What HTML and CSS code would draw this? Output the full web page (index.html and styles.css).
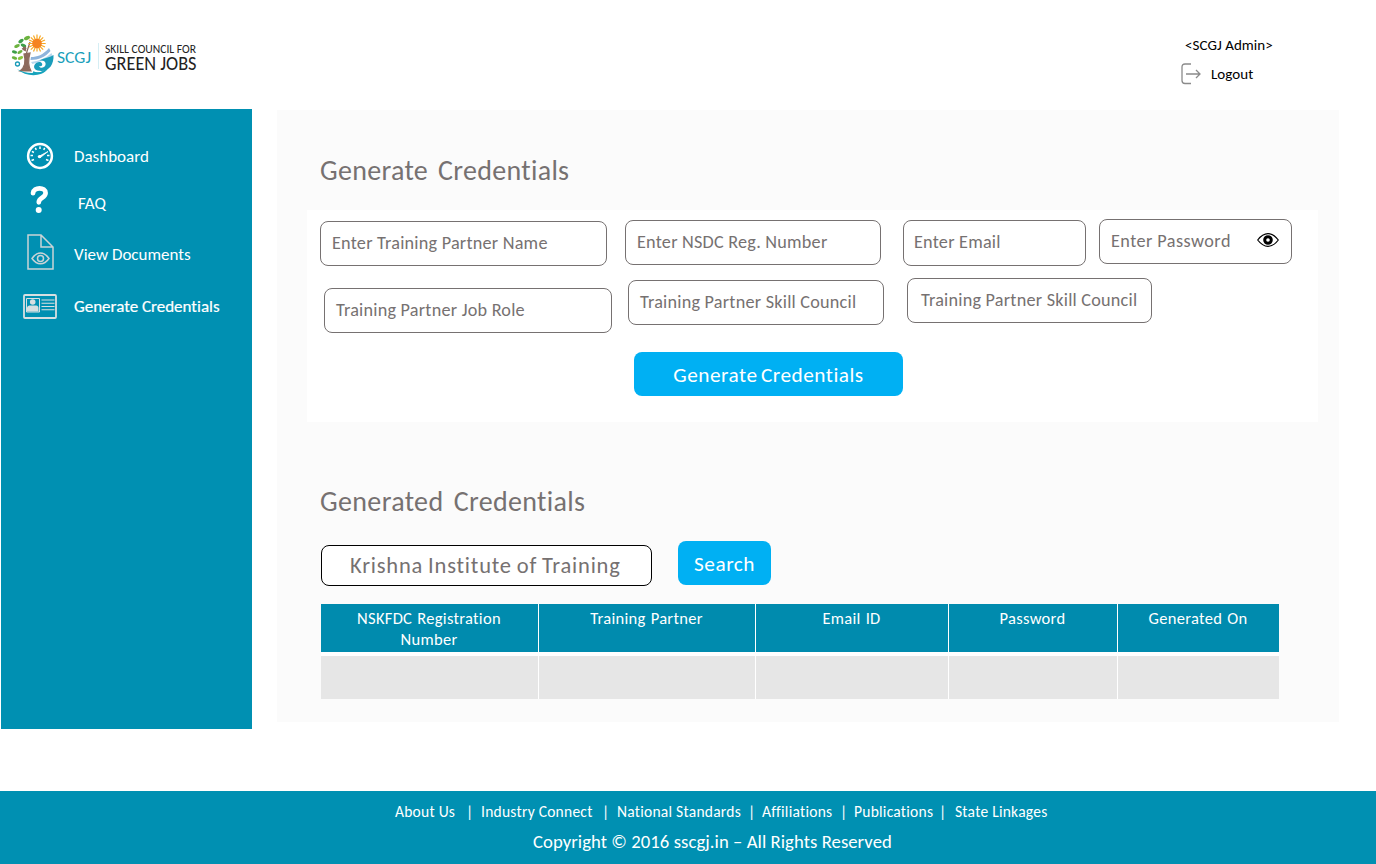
FILE: index.html
```html
<!DOCTYPE html>
<html lang="en">
<head>
<meta charset="utf-8">
<title>SCGJ – Generate Credentials</title>
<link rel="stylesheet" href="styles.css">
</head>
<body>
<header class="header">
  <svg class="logo" width="190" height="46" viewBox="10 33 190 46">
    <g fill="#6cb33f">
      <ellipse cx="27" cy="38" rx="3.2" ry="1.8" transform="rotate(-25 27 38)"/>
      <ellipse cx="21" cy="41" rx="3" ry="1.7" transform="rotate(-35 21 41)" fill="#3f9f49"/>
      <ellipse cx="17" cy="46" rx="3" ry="1.6" transform="rotate(-25 17 46)"/>
      <ellipse cx="23.500" cy="45.500" rx="3" ry="1.6" transform="rotate(25 23.500 45.500)" fill="#3f9f49"/>
      <ellipse cx="14.500" cy="52" rx="2.600" ry="1.600" transform="rotate(10 14.500 52)" fill="#3f9f49"/>
      <ellipse cx="20" cy="52" rx="2.800" ry="1.500" transform="rotate(-30 20 52)"/>
      <ellipse cx="14.500" cy="58" rx="2.800" ry="1.500" transform="rotate(15 14.500 58)"/>
      <ellipse cx="20.500" cy="58" rx="2.800" ry="1.600" transform="rotate(-20 20.500 58)" fill="#8cc63f"/>
    </g>
    <circle cx="17.500" cy="64" r="2" fill="none" stroke="#1a9bb8" stroke-width="1.300"/>
    <path d="M26 51l-4-2.500M26.500 53l3.500-11M24 54c2 7 1 13-4 17h11c-3-5-3-11-1-18z" fill="#8c6a5d" stroke="#8c6a5d" stroke-width="1.200"/>
    <circle cx="24.500" cy="48.500" r="1.900" fill="#8c6a5d"/>
    <path d="M37 34.500v17M28.300 43.500h17.400M30.800 37.300l12.400 12.400M43.200 37.300l-12.400 12.400M33.500 35.500l7 16M40.500 35.500l-7 16M29 40l16 7M29 47l16-7" stroke="#f7a823" stroke-width="1.200"/>
    <circle cx="37" cy="43.500" r="4.800" fill="#f58220"/>
    <path d="M31 57c6 0 12-2 18-9l1.500 3c-5 6-12 9-20 9z" fill="#8fb4dc"/>
    <path d="M31 62c8-1 15-4 20.500-9l1 3c-5 3-11 5-20 8z" fill="#b9d8ee"/>
    <path d="M53.500 55c.5 9-4 16-12 16-6 0-8.500-3-7-6 1.500-3 6-4 7.500-1.500 1 2-1 3.500-3 2.500 1 3 5.500 2 6.500-1 1-4-3-5-6-4.500 6-3 9-2.500 14-5.500z" fill="#1b9dbb"/>
    <path d="M17 69c8 5 20 5 30 1-5 6-20 8-30-1z" fill="#16a3bc"/>
    <path d="M33 72c4 2 9 1 14-3" fill="none" stroke="#16a3bc" stroke-width="1.500"/>
    <text class="logo-cyan" x="57" y="62.500" font-size="17" textLength="34" lengthAdjust="spacingAndGlyphs">SCGJ</text>
    <path d="M98.500 43v26" stroke="#d5eef4"/>
    <text class="logo-dark" x="105" y="53" font-size="12.500" textLength="91" lengthAdjust="spacingAndGlyphs">SKILL COUNCIL FOR</text>
    <text class="logo-dark" x="105" y="70" font-size="19.500" textLength="91.500" lengthAdjust="spacingAndGlyphs">GREEN JOBS</text>
  </svg>
  <div class="account">
    <div class="account-name">&lt;SCGJ Admin&gt;</div>
    <a class="logout">
      <svg width="20" height="22" viewBox="0 0 20 22" fill="none" stroke="#8b8b8b" stroke-width="1.300"><path d="M10 1H4C2 1 1 2 1 4v13.500c0 2 1 3 3 3h6M5 11h14M15 7l4 4-4 4"/></svg>
      <span>Logout</span>
    </a>
  </div>
</header>

<main class="main">
  <nav class="sidebar">
    <a class="nav nav-dashboard">
      <svg width="28" height="28" viewBox="0 0 28 28" fill="none" stroke="#fff">
        <circle cx="14" cy="14" r="11.900" stroke-width="2.500"/>
        <path d="M14 4.500v2.500M9.300 5.800l1 2M18.700 5.800l-1 2M5.900 9.300l2 1.200M4.500 13.600h2.500M5.500 18.500l2.500-1M22.500 18.500l-2.500-1M21 13.600h2.500" stroke-width="1.500"/>
        <path d="M13 14.300l9-4.800-8 6.300z" fill="#fff" stroke-width=".8"/>
        <circle cx="13.500" cy="14.600" r="1.700" fill="#fff" stroke="none"/>
      </svg>
      <span>Dashboard</span>
    </a>
    <a class="nav nav-faq">
      <svg width="20" height="28" viewBox="0 0 20 28"><path d="M4 8.200C4.600 1.600 16.600 1.800 16.600 8c0 5-6.800 4.600-6.800 9.300" fill="none" stroke="#fff" stroke-width="4.700" stroke-linecap="round"/><circle cx="9.700" cy="25" r="3" fill="#fff"/></svg>
      <span>FAQ</span>
    </a>
    <a class="nav nav-documents">
      <svg width="28" height="36" viewBox="0 0 28 36" fill="none" stroke="#c9d3d6" stroke-width="1.500"><path d="M1 1h13l12 12v22H1zM14 1v12h12"/><path d="M5 24.500c5-7.500 12-7.500 17 0-5 7-12 7-17 0z"/><circle cx="13.500" cy="24.500" r="3"/></svg>
      <span>View Documents</span>
    </a>
    <a class="nav nav-credentials">
      <svg width="34" height="25" viewBox="0 0 34 25" fill="none" stroke="#d7dfe1"><rect x="1" y="1" width="32" height="23" rx="1" stroke-width="1.800"/><path d="M3.500 4.500h13v13.500h-13z"/><path d="M18.500 6h13M18.500 9.300h13M18.500 12.500h13M18.500 15.800h13" stroke-width="1.100"/><circle cx="9.700" cy="8" r="2.800" fill="#d7dfe1" stroke="none"/><path d="M4 17.500v-3.500c0-2 2-2.500 3.500-2.500h4.500c2 0 3.500.5 3.500 2.500v3.500z" fill="#d7dfe1" stroke="none"/></svg>
      <span>Generate Credentials</span>
    </a>
  </nav>

  <section class="content">
    <h1 class="title">Generate Credentials</h1>
    <form class="panel">
      <div class="row row-first">
        <div class="field field-name"><span>Enter Training Partner Name</span></div>
        <div class="field field-reg"><span>Enter NSDC Reg. Number</span></div>
        <div class="field field-email"><span>Enter Email</span></div>
        <div class="field field-password"><span>Enter Password</span>
          <svg width="22" height="14" viewBox="0 0 22 14"><path d="M.7 7Q5.500.7 11 .7T21.300 7Q16.500 13.300 11 13.300T.7 7z" fill="#fff" stroke="#000" stroke-width="1.200"/><circle cx="11" cy="7" r="3.300" fill="none" stroke="#000" stroke-width="3"/></svg>
        </div>
      </div>
      <div class="row row-second">
        <div class="field field-role"><span>Training Partner Job Role</span></div>
        <div class="field field-council"><span>Training Partner Skill Council</span></div>
        <div class="field field-council-alt"><span>Training Partner Skill Council</span></div>
      </div>
      <button class="button button-generate" type="button">Generate Credentials</button>
    </form>

    <h2 class="title title-generated">Generated Credentials</h2>
    <div class="search">
      <div class="search-input">Krishna Institute of Training</div>
      <button class="button button-search" type="button">Search</button>
    </div>
    <div class="table">
      <div class="th">NSKFDC Registration<br>Number</div>
      <div class="th">Training Partner</div>
      <div class="th">Email ID</div>
      <div class="th">Password</div>
      <div class="th">Generated On</div>
      <div class="td"></div><div class="td"></div><div class="td"></div><div class="td"></div><div class="td"></div>
    </div>
  </section>
</main>

<footer class="footer">
  <div class="links">
    <a>About Us</a><i>|</i><a>Industry Connect</a><i>|</i><a>National Standards</a><i>|</i><a>Affiliations</a><i>|</i><a>Publications</a><i>|</i><a>State Linkages</a>
  </div>
  <div class="copyright">Copyright © 2016 sscgj.in – All Rights Reserved</div>
</footer>
</body>
</html>
```
FILE: styles.css
```css
* { box-sizing: border-box; }
body {
  margin: 0;
  width: 1376px;
  height: 864px;
  overflow: hidden;
  background: #fff;
  font-family: Carlito, Lato, sans-serif;
  font-variant-ligatures: none;
  white-space: nowrap;
  display: flex;
  flex-direction: column;
}

.header {
  height: 109px;
  padding: 33px 0 0 10px;
  display: flex;
  justify-content: space-between;
}
.logo { flex: none; overflow: visible; }
.logo-cyan { fill: #1a9fbb; }
.logo-dark { fill: #222; }
.account {
  width: 195px;
  padding-top: 2px;
  font-size: 15px;
  line-height: 20px;
  letter-spacing: .05px;
  color: #000;
}
.account-name { padding-left: 4px; }
.logout {
  margin-top: 8px;
  display: flex;
  align-items: center;
  gap: 10px;
}

.main { height: 682px; display: flex; align-items: flex-start; }
.sidebar {
  width: 251px;
  height: 620px;
  margin-left: 1px;
  background: #0090b2;
  padding-top: 33px;
}
.nav {
  display: flex;
  color: #fff;
  font-size: 17px;
  line-height: 20px;
}
.nav svg { flex: none; }
.nav-dashboard { height: 43px; padding-left: 25px; }
.nav-dashboard span { margin: 5px 0 0 20px; }
.nav-faq { height: 49px; padding-left: 28px; }
.nav-faq span { margin: 9px 0 0 29px; }
.nav-documents { height: 60px; padding-left: 26px; }
.nav-documents span { margin: 11px 0 0 19px; }
.nav-credentials { padding-left: 22px; }
.nav-credentials span { margin: 3px 0 0 17px; -webkit-text-stroke: .2px #fff; }

.content {
  width: 1062px;
  height: 612px;
  margin: 1px 0 0 25px;
  background: #fbfbfb;
}
.title {
  margin: 45px 0 0 43px;
  font-size: 28px;
  line-height: 32px;
  font-weight: 400;
  color: #767171;
  letter-spacing: .3px;
  word-spacing: 3.5px;
}
.title-generated { margin-top: 64px; letter-spacing: .35px; }
.panel {
  width: 1011px;
  height: 212px;
  margin: 23px 0 0 30px;
  background: #fff;
}
.row { display: flex; align-items: flex-start; }
.row-first { height: 68px; padding: 9px 0 0 13px; }
.row-second { height: 74px; padding-left: 17px; }
.field {
  height: 45px;
  border: 1px solid #767171;
  border-radius: 8px;
  background: #fff;
  padding: 0 0 2px 11px;
  display: flex;
  align-items: center;
  font-size: 18.2px;
  letter-spacing: .23px;
  color: #767171;
}
.field-name { width: 287px; margin-top: 2px; }
.field-reg { width: 256px; margin: 1px 0 0 18px; }
.field-email { width: 183px; height: 46px; margin: 1px 0 0 22px; padding-left: 10px; }
.field-password { width: 193px; margin-left: 13px; justify-content: space-between; padding-right: 12px; letter-spacing: .45px; }
.field-password svg { margin-bottom: 1px; }
.field-role { width: 288px; margin-top: 10px; }
.field-council { width: 256px; margin: 2px 0 0 16px; }
.field-council-alt { width: 245px; margin-left: 23px; padding-left: 13px; }
.button {
  display: block;
  border: 0;
  padding: 0;
  height: 44px;
  border-radius: 8px;
  background: #00b0f3;
  color: #fff;
  font-family: inherit;
  font-variant-ligatures: none;
  font-size: 21.3px;
  line-height: 46px;
  letter-spacing: .5px;
}
.button-generate { width: 269px; margin-left: 327px; word-spacing: -2px; }

.search { display: flex; margin: 23px 0 0 44px; gap: 26px; }
.search-input {
  width: 331px;
  height: 41px;
  margin-top: 4px;
  padding-left: 28px;
  border: 1px solid #000;
  border-radius: 8px;
  background: #fff;
  color: #767171;
  font-size: 22.5px;
  line-height: 39px;
  letter-spacing: .8px;
  word-spacing: -1px;
}
.button-search { width: 93px; }
.table {
  width: 958px;
  margin: 18px 0 0 44px;
  display: grid;
  grid-template-columns: 217px 216px 192px 168px 161px;
  grid-template-rows: 48px 43px;
  column-gap: 1px;
  row-gap: 4px;
  background: #fff;
}
.th {
  background: #008bae;
  color: #fff;
  font-size: 16.5px;
  line-height: 21px;
  letter-spacing: .3px;
  word-spacing: 1px;
  padding: 4px 1px 0 0;
  text-align: center;
}
.td { background: #e6e6e6; }

.footer {
  height: 73px;
  background: #0090b2;
  color: #fff;
  padding-top: 11px;
}
.links {
  display: grid;
  grid-template-columns: 72px 14px 122px 14px 132px 13px 79px 13px 86px 15px auto;
  margin-left: 395px;
  font-size: 15.5px;
  line-height: 20px;
  letter-spacing: .25px;
}
.links i { font-style: normal; margin-left: -1px; }
.copyright {
  margin: 10px 0 0 533px;
  font-size: 18.7px;
  line-height: 20px;
  letter-spacing: .06px;
}
```
